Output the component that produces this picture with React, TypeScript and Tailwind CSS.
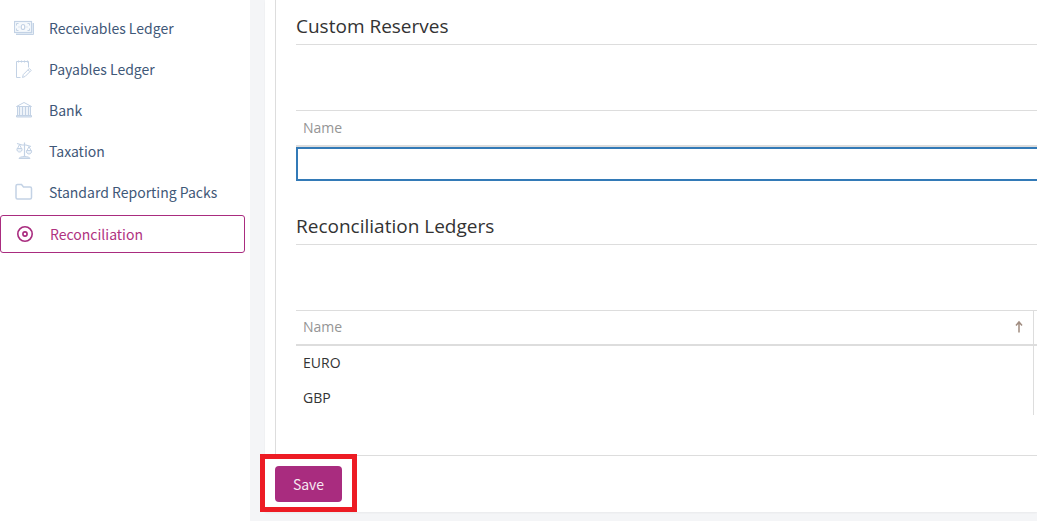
import { useState } from 'react';
import type { ReactNode } from 'react';

type iconProps = {
  className?: string;
  children: ReactNode;
};

const Icon = ({ className = '', children }: iconProps) => (
  <svg
    viewBox="0 0 20 20"
    className={`w-5 h-5 shrink-0 ${className}`}
    fill="none"
    stroke="currentColor"
    strokeWidth="1"
    aria-hidden="true"
  >
    {children}
  </svg>
);

const MoneyIcon = () => (
  <Icon>
    <path d="M2 16.500h17.500V5" strokeWidth="1" />
    <path d="M2 15.500h16.500V5" stroke="#e3ebf4" />
    <rect x="0.500" y="3.500" width="17" height="11" fill="#f6f9fc" strokeWidth="1.200" />
    <path d="M2.500 7.500v-2h2M13.500 5.500h2v2M15.500 10.500v2h-2M4.500 12.500h-2v-2" />
    <ellipse cx="9" cy="9" rx="1.800" ry="2.500" fill="#fff" strokeWidth="1.200" />
    <path d="M4.500 9h1M12.500 9h1" />
  </Icon>
);

const NotepadIcon = () => (
  <Icon>
    <path d="M6.500 18.500h-4v-16h12v6" />
    <path d="M4.500 1.500v2M7.500 1.500v2M10.500 1.500v2M13.500 1.500v2" />
    <path d="M8.500 18.500l.8-3 6-6 1.900 1.900-6 6zM14 10.800l1.900 1.900" />
  </Icon>
);

const BankIcon = () => (
  <Icon>
    <path d="M2.500 6.500L10 2.500l7.500 4z" />
    <path d="M4 7v8h12V7z" fill="#eef3f9" stroke="none" />
    <path d="M3.500 7v8M5.500 7v8M8.500 7v8M11.500 7v8M14.500 7v8M16.500 7v8" />
    <path d="M2.500 15.500h15v1.500h-15z" fill="#dce6f1" />
  </Icon>
);

const ScalesIcon = () => (
  <Icon>
    <path d="M10.500 1.500v14.500M3 2.500l5 1.500h4l5 1.500" strokeWidth="1.200" />
    <path d="M5.500 3.500L3.500 7.500M5.500 3.500l2 4M15 5.500l-2 4M15 5.500l2 4" />
    <path d="M3 7.500h5c.5 2-.8 3.500-2.500 3.500S2.500 9.500 3 7.500zM12.500 9.500h5c.5 2-.8 3.500-2.500 3.500s-3-1.500-2.500-3.500z" fill="#eef3f9" />
    <path d="M5 17.500c0-1 2.500-2 5.500-2s5.500 1 5.500 2z" fill="#dce6f1" />
  </Icon>
);

const FolderIcon = () => (
  <Icon>
    <path
      d="M3.500 2.500h4L9.500 5h6.500a1.500 1.500 0 0 1 1.500 1.500v9a1.500 1.500 0 0 1-1.500 1.500H3.500A1.500 1.500 0 0 1 2 15.500V4a1.500 1.500 0 0 1 1.500-1.500z"
      strokeWidth="1.500"
    />
  </Icon>
);

const TargetIcon = () => (
  <Icon className="text-[#a92c7f]">
    <circle cx="10" cy="10" r="7.200" strokeWidth="1.600" />
    <circle cx="10" cy="10" r="2.100" strokeWidth="1.600" />
  </Icon>
);

const menu = [
  { id: 1, title: 'Receivables Ledger', icon: <MoneyIcon /> },
  { id: 2, title: 'Payables Ledger', icon: <NotepadIcon /> },
  { id: 3, title: 'Bank', icon: <BankIcon /> },
  { id: 4, title: 'Taxation', icon: <ScalesIcon /> },
  { id: 5, title: 'Standard Reporting Packs', icon: <FolderIcon /> },
];

const ledgers = ['EURO', 'GBP'];

const SideNav = () => (
  <nav className="w-[250px] shrink-0 bg-white pt-[7px] pr-[5px] text-sm font-['Noto_Sans_CJK_SC',sans-serif] text-[#3f5878]">
    <ul>
      {menu.map((item) => (
        <li key={item.id}>
          <a href="#" className="flex items-center gap-[15px] h-[41px] pl-[14px]">
            <span className="text-[#c3d2e5]">{item.icon}</span>
            {item.title}
          </a>
        </li>
      ))}
      <li>
        <a
          href="#"
          aria-current="page"
          className="flex items-center gap-[15px] h-[38px] mt-[3px] pl-[14px] border border-[#a92c7f] rounded-[3px] text-[#b0327f]"
        >
          <TargetIcon />
          Reconciliation
        </a>
      </li>
    </ul>
  </nav>
);

const SectionTitle = ({ children }: { children: ReactNode }) => (
  <h2 className="h-9 border-b border-[#dddddd] text-[19px] leading-[34px] text-[#333333]">
    {children}
  </h2>
);

export default function App() {
  const [name, setName] = useState('');

  return (
    <div className="flex min-h-screen bg-[#f4f5f7] font-['Open_Sans',sans-serif] text-sm text-[#333333]">
      <SideNav />
      <main className="grow min-w-0 pl-[15px]">
        <div className="bg-white pl-[10px] pb-[10px] shadow-xs">
          <div className="border-l border-b border-[#dddddd] pt-[9px] pl-5 pb-10">
            <section>
              <SectionTitle>Custom Reserves</SectionTitle>
              <table className="w-full mt-[65px] border-collapse">
                <thead>
                  <tr>
                    <th className="h-[35px] border-t border-b-2 border-[#dddddd] px-[7px] text-left font-normal text-[#959595]">
                      Name
                    </th>
                  </tr>
                </thead>
                <tbody>
                  <tr>
                    <td className="p-0">
                      <input
                        type="text"
                        aria-label="Name"
                        value={name}
                        onChange={(e) => setName(e.target.value)}
                        className="block w-full h-[34px] px-[7px] border-2 border-r-0 border-[#337ab7] outline-none"
                      />
                    </td>
                  </tr>
                </tbody>
              </table>
            </section>

            <section className="mt-7">
              <SectionTitle>Reconciliation Ledgers</SectionTitle>
              <table className="w-full mt-[65px] border-collapse">
                <thead>
                  <tr className="border-t border-b-2 border-[#dddddd]">
                    <th className="h-[35px] px-[7px] font-normal text-[#959595]">
                      <div className="flex items-center justify-between">
                        Name
                        <svg viewBox="0 0 14 14" className="w-[14px] h-[14px]" fill="none" stroke="#a08c80" strokeWidth="1.500" aria-hidden="true">
                          <path d="M7 12.500V3M4 5.500L7 2l3 3.500" />
                        </svg>
                      </div>
                    </th>
                    <td className="w-1 p-0 border-l border-[#dddddd]" />
                  </tr>
                </thead>
                <tbody>
                  {ledgers.map((ledger) => (
                    <tr key={ledger}>
                      <td className="h-[35px] px-[7px]">{ledger}</td>
                      <td className="w-1 p-0 border-l border-[#dddddd]" />
                    </tr>
                  ))}
                </tbody>
              </table>
            </section>
          </div>

          <div className="relative w-max mt-[10px]">
            <button
              type="button"
              className="block w-[67px] h-9 rounded-[4px] bg-[#a92c7f] text-sm text-[#f6e9f2] font-['Noto_Sans_CJK_SC',sans-serif]"
            >
              Save
            </button>
            <div className="absolute -top-3 -bottom-[10px] -inset-x-[15px] border-[5px] border-[#ed1c24] pointer-events-none" />
          </div>
        </div>
      </main>
    </div>
  );
}
